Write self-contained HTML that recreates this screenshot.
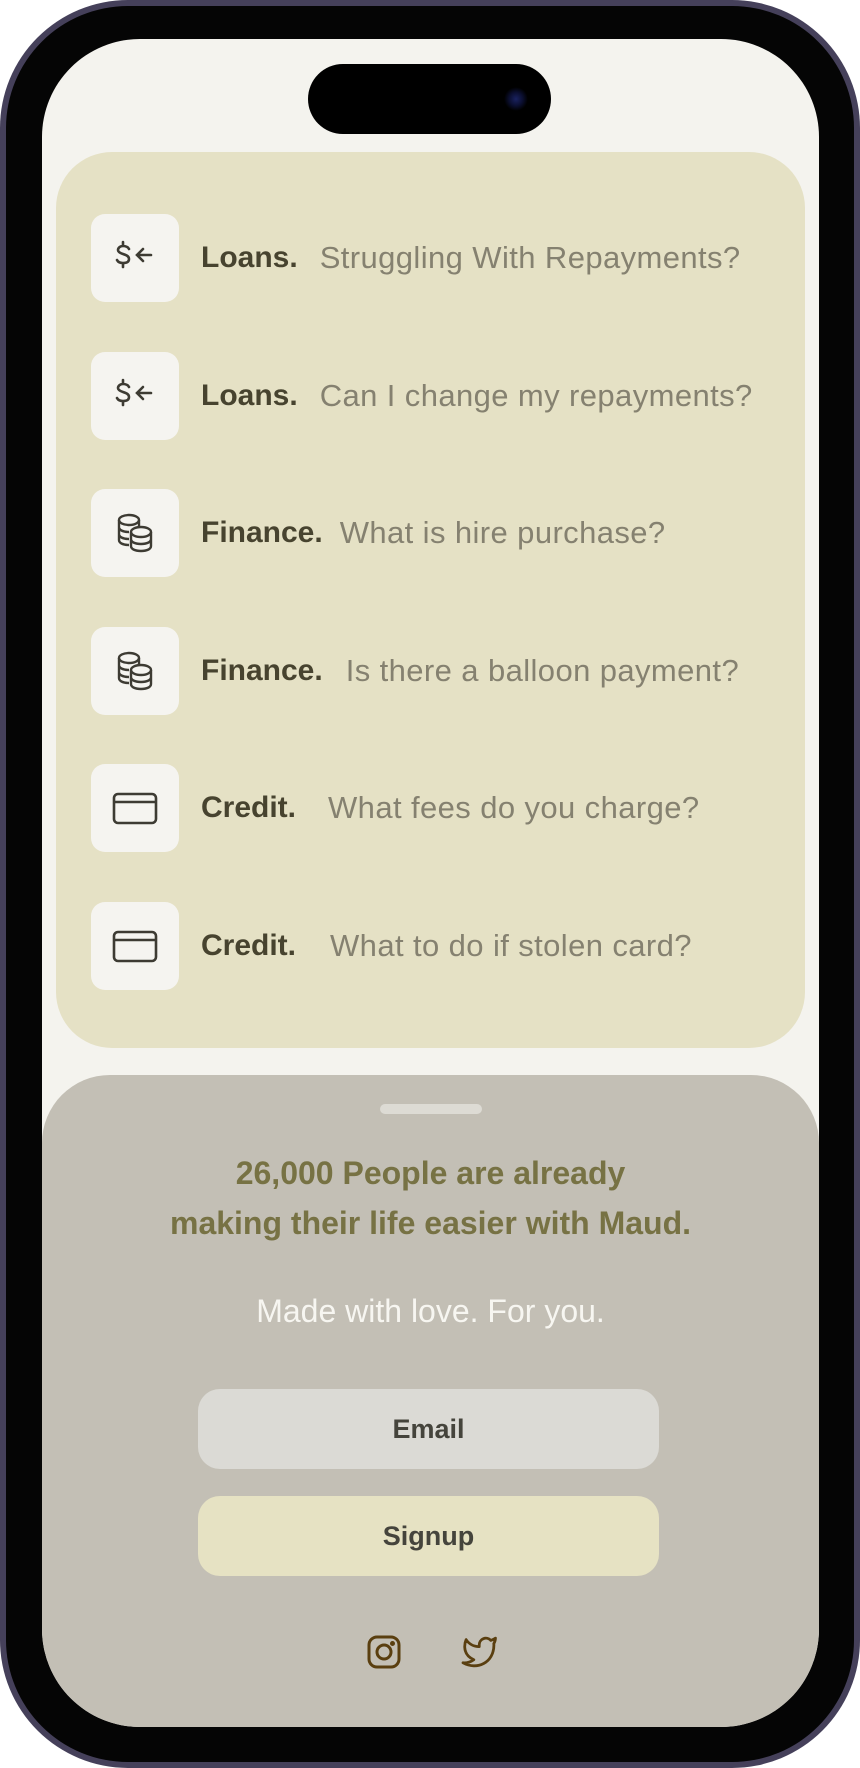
<!DOCTYPE html>
<html><head><meta charset="utf-8"><style>
*{margin:0;padding:0;box-sizing:border-box}
body{width:860px;height:1768px;background:#fff;position:relative;overflow:hidden;font-family:"Liberation Sans",sans-serif}
.phone{position:absolute;left:0;top:0;width:860px;height:1768px;border-radius:128px;background:#45405a;}
.bezel{position:absolute;left:6px;top:6px;right:6px;bottom:6px;border-radius:122px;background:#050505;}
.screen{position:absolute;left:42px;top:39px;width:777px;height:1688px;border-radius:98px;background:#f4f3ee;overflow:hidden}
.island{position:absolute;left:266px;top:25px;width:243px;height:70px;border-radius:35px;background:#000}
.cam{position:absolute;left:196px;top:23px;width:24px;height:24px;border-radius:50%;background:radial-gradient(circle,#1a2260 0,#0b0f30 40%,#000 70%)}
.card{position:absolute;left:14px;top:113px;width:749px;height:896px;border-radius:56px;background:#e5e1c5}
.row{position:absolute;left:35px;height:88px;display:flex;align-items:center}
.ib{width:88px;height:88px;border-radius:14px;background:#f5f4f0;display:flex;align-items:center;justify-content:center}
.lb{font-weight:bold;font-size:30px;color:#47432f;margin-left:22px;letter-spacing:0px}
.q{font-size:31px;color:#858170;font-weight:300;letter-spacing:0.4px;margin-left:22px}
.sheet{position:absolute;left:0;top:1036px;width:777px;height:700px;border-radius:68px 68px 0 0;background:#c3bfb5}
.handle{position:absolute;left:338px;top:29px;width:102px;height:10px;border-radius:5px;background:#dddbd4}
.h{position:absolute;left:0;width:777px;text-align:center;font-size:32px;font-weight:bold;color:#777244}
.m{position:absolute;left:0;width:777px;top:218px;text-align:center;font-size:32px;color:#f7f6f1;font-weight:300}
.btn{position:absolute;left:156px;width:461px;height:80px;border-radius:22px;display:flex;align-items:center;justify-content:center;font-size:27px;font-weight:bold;color:#45443c}
</style></head><body>
<div class="phone"><div class="bezel"></div></div>
<div class="screen">
<div class="island"><div class="cam"></div></div>
<div class="card">
<div class="row" style="top:62px"><div class="ib"><svg width="44" height="40" viewBox="0 0 44 40" fill="none" stroke="#3d3b33" stroke-width="2.6" stroke-linecap="round"><path d="M16 11c-1-2-3-3-6-3-3 0-5 2-5 4s2 3 5 4 6 2 6 5-2 4-6 4c-3 0-5-1-6-3M10 4v4M10 25v4"/><path d="M38 17H25M30 11l-6 6 6 6"/></svg></div><span class="lb">Loans.</span><span class="q">Struggling With Repayments?</span></div>
<div class="row" style="top:200px"><div class="ib"><svg width="44" height="40" viewBox="0 0 44 40" fill="none" stroke="#3d3b33" stroke-width="2.6" stroke-linecap="round"><path d="M16 11c-1-2-3-3-6-3-3 0-5 2-5 4s2 3 5 4 6 2 6 5-2 4-6 4c-3 0-5-1-6-3M10 4v4M10 25v4"/><path d="M38 17H25M30 11l-6 6 6 6"/></svg></div><span class="lb">Loans.</span><span class="q">Can I change my repayments?</span></div>
<div class="row" style="top:337px"><div class="ib"><svg width="44" height="44" viewBox="0 0 44 44" fill="none" stroke="#3d3b33" stroke-width="2.4"><ellipse cx="16" cy="9" rx="10" ry="5"/><path d="M6 9v20c0 3 4 5 10 5M6 16c0 3 4 5 10 5M6 23c0 3 4 5 10 5M26 9v8"/><ellipse cx="28" cy="21" rx="10" ry="5"/><path d="M18 21v14c0 3 4 5 10 5s10-2 10-5V21M18 28c0 3 4 5 10 5s10-2 10-5"/></svg></div><span class="lb">Finance.</span><span class="q" style="margin-left:17px">What is hire purchase?</span></div>
<div class="row" style="top:475px"><div class="ib"><svg width="44" height="44" viewBox="0 0 44 44" fill="none" stroke="#3d3b33" stroke-width="2.4"><ellipse cx="16" cy="9" rx="10" ry="5"/><path d="M6 9v20c0 3 4 5 10 5M6 16c0 3 4 5 10 5M6 23c0 3 4 5 10 5M26 9v8"/><ellipse cx="28" cy="21" rx="10" ry="5"/><path d="M18 21v14c0 3 4 5 10 5s10-2 10-5V21M18 28c0 3 4 5 10 5s10-2 10-5"/></svg></div><span class="lb">Finance.</span><span class="q" style="margin-left:23px">Is there a balloon payment?</span></div>
<div class="row" style="top:612px"><div class="ib"><svg width="46" height="34" viewBox="0 0 46 34" fill="none" stroke="#3d3b33" stroke-width="2.6"><rect x="2" y="3" width="42" height="29" rx="4"/><path d="M3 11h40"/></svg></div><span class="lb">Credit.</span><span class="q" style="margin-left:32px">What fees do you charge?</span></div>
<div class="row" style="top:750px"><div class="ib"><svg width="46" height="34" viewBox="0 0 46 34" fill="none" stroke="#3d3b33" stroke-width="2.6"><rect x="2" y="3" width="42" height="29" rx="4"/><path d="M3 11h40"/></svg></div><span class="lb">Credit.</span><span class="q" style="margin-left:34px">What to do if stolen card?</span></div>
</div>
<div class="sheet">
<div class="handle"></div>
<div class="h" style="top:80px">26,000 People are already</div>
<div class="h" style="top:130px">making their life easier with Maud.</div>
<div class="m">Made with love. For you.</div>
<div class="btn" style="top:314px;background:#dbdad5">Email</div>
<div class="btn" style="top:421px;background:#e6e2c3">Signup</div>
<svg style="position:absolute;left:324px;top:559px" width="36" height="36" viewBox="0 0 36 36" fill="none" stroke="#5a3f10" stroke-width="3"><rect x="3" y="3" width="30" height="30" rx="8"/><circle cx="18" cy="18" r="7"/><circle cx="26.5" cy="9.5" r="1" fill="#5a3f10"/></svg>
<svg style="position:absolute;left:419px;top:560px" width="38" height="34" viewBox="0 0 24 22" fill="none" stroke="#5a3f10" stroke-width="1.8" stroke-linejoin="round"><path d="M22 2a10 10 0 0 1-3 1.5 4.3 4.3 0 0 0-7.5 3v1A10 10 0 0 1 3 3s-4 9 5 13a11 11 0 0 1-7 2c9 5 20 0 20-11.5 0-.3 0-.6-.1-.8A7.7 7.7 0 0 0 22 2z"/></svg>
</div>
</div>
</body></html>
